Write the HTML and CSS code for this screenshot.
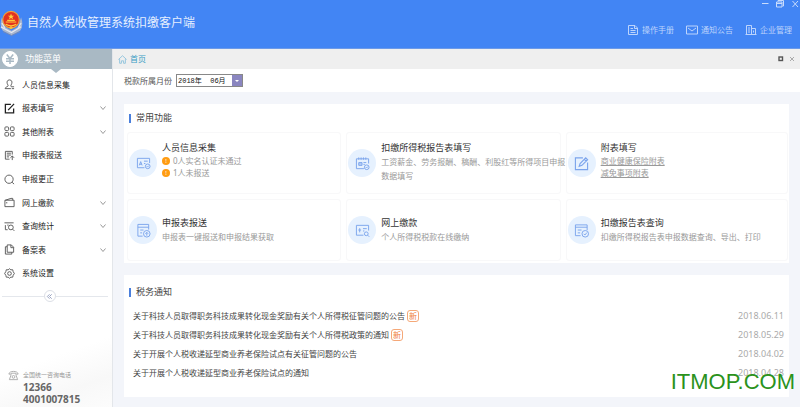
FILE: index.html
```
<!DOCTYPE html>
<html lang="zh-CN">

<head>
  <meta charset="UTF-8" />
  <title>自然人税收管理系统扣缴客户端</title>
  <meta name="viewport" content="width=device-width, initial-scale=1.0">
  <link rel="stylesheet" href="styles.css">
</head>

<body>

  <!-- Top bar -->
  <header class="topbar">
    <div class="brand">
      <svg class="emblem" viewBox="0 0 24 28">
        <path d="M2 8 Q-1 17 3 22 L12 27 L21 22 Q25 17 22 8 L19 18 L12 22 L5 18 Z" fill="#a9b6cf" />
        <path d="M1 18 L12 24 L22 18 M2 14 L5 19 M22 14 L19 19" fill="none" stroke="#e3e8f2" stroke-width="1.3" />
        <path d="M3 23 L12 27 L21 23" fill="none" stroke="#7389b8" />
        <circle cx="11.5" cy="10.5" r="8.6" fill="#e2321f" stroke="#f0a23a" stroke-width="1.2" />
        <path d="M11.5 4 L12.4 6.4 H14.8 L12.9 7.8 L13.6 10 L11.5 8.7 L9.4 10 L10.1 7.8 L8.2 6.4 H10.6 Z" fill="#ffd23e" />
        <path d="M6 13 H17 M7.5 11.3 H15.5 M6 15.2 Q11.5 18.5 17 15.2" fill="none" stroke="#ffc93a" stroke-width="1.2" />
        <circle cx="11.5" cy="18.8" r="1.8" fill="#f6b93a" />
      </svg>
      <h1>自然人税收管理系统扣缴客户端</h1>
    </div>
    <div class="topbar-right">
      <div class="window-controls">
        <button aria-label="最小化"><svg viewBox="0 0 8 8"><path d="M1 3.500 H7.500" /></svg></button>
        <button aria-label="还原"><svg viewBox="0 0 8 8"><path d="M2 1.500 V0.500 H7.500 V6 H6.500 M0.500 2 H6 V7 H0.500 Z M0.500 3.500 H6" /></svg></button>
        <button aria-label="关闭"><svg viewBox="0 0 8 8"><path d="M1.500 1 L7 7 M7 1 L1.500 7" /></svg></button>
      </div>
      <nav class="top-links">
        <a href="#">
          <svg viewBox="0 0 12 12"><path d="M1.500 1.500 H8 L10.500 4 V10.500 H1.500 Z M3.500 4.500 H6 M3.500 6.500 H8.500 M3.500 8.500 H8.500 M7.500 1.500 V4.500 H10" /></svg>
          操作手册
        </a>
        <a href="#">
          <svg viewBox="0 0 12 12"><path d="M0.500 2 H11.500 V10 H0.500 Z M2 4 L6 7 L10 4" /></svg>
          通知公告
        </a>
        <a href="#">
          <svg viewBox="0 0 12 12"><path d="M1.500 10.500 V1.500 H6.500 V10.500 M6.500 4.500 H10.500 V10.500 M0.500 10.500 H11.500 M3 4 H5 M3 6 H5 M3 8 H5 M8.500 6.500 V8.500" /></svg>
          企业管理
        </a>
      </nav>
    </div>
  </header>

  <div class="layout">

    <!-- Sidebar -->
    <aside class="sidebar">
      <div class="menu-head">
        <svg class="yen" viewBox="0 0 16 16">
          <circle cx="8" cy="8" r="7.500" fill="#fff" />
          <path d="M4.800 3.500 L8 7.500 L11.200 3.500 M8 7.500 V13 M4 7.700 H12 M4 10.200 H12" fill="none" stroke="#a9b9c4" stroke-width="1.500" />
        </svg>
        <h2>功能菜单</h2>
      </div>

      <nav class="menu">
        <a href="#">
          <svg class="icon" viewBox="0 0 12 12"><path d="M6 1 C3.500 1 3 3 3.500 4.800 C3.800 6.200 4.600 6.800 4.600 7.500 C4.400 8.500 1.500 8.400 1.200 10.500 H7.500 M6 1 C8.500 1 9 3 8.500 4.800 C8.200 6.200 7.400 6.800 7.400 7.500 L8 8.500 H11 M8.500 10.500 H11" /></svg>
          <span>人员信息采集</span>
        </a>
        <a href="#">
          <svg class="icon dark" viewBox="0 0 12 12"><path d="M7.500 1.500 H1.500 V10.800 H10.500 V6 M4.500 7.800 L11 1" /></svg>
          <span>报表填写</span>
          <svg class="arrow" viewBox="0 0 6 6"><path d="M0.500 1.500 L3 4.500 L5.500 1.500" /></svg>
        </a>
        <a href="#">
          <svg class="icon" viewBox="0 0 12 12"><rect x="1" y="1" width="4" height="4" rx="1" /><rect x="7" y="1" width="4" height="4" rx="1" /><rect x="1" y="7" width="4" height="4" rx="1" /><rect x="7" y="7" width="4" height="4" rx="1" /></svg>
          <span>其他附表</span>
          <svg class="arrow" viewBox="0 0 6 6"><path d="M0.500 1.500 L3 4.500 L5.500 1.500" /></svg>
        </a>
        <a href="#">
          <svg class="icon" viewBox="0 0 12 12"><path d="M6 10 H1.500 V1.500 H9 V5 M3 3.500 H7.500 M3 5.500 H7.500 M3 7.500 H5.500 M9 11 V6.500 M7 8.500 L9 6.500 L11 8.500" /></svg>
          <span>申报表报送</span>
        </a>
        <a href="#">
          <svg class="icon" viewBox="0 0 12 12"><circle cx="5.500" cy="5.700" r="4.500" /><path d="M8.800 9 L11 11" /></svg>
          <span>申报更正</span>
        </a>
        <a href="#">
          <svg class="icon" viewBox="0 0 12 12"><path d="M1 3.500 H11 V10.500 H1 Z M1.500 3.500 L7.500 1.500 H9.500 V3.500 M3 5.500 V7" /></svg>
          <span>网上缴款</span>
          <svg class="arrow" viewBox="0 0 6 6"><path d="M0.500 1.500 L3 4.500 L5.500 1.500" /></svg>
        </a>
        <a href="#">
          <svg class="icon" viewBox="0 0 12 12"><path d="M0.500 2 H10.500 M1.500 4.500 V9.500 H4 M3.500 4.500 H5" /><circle cx="7.500" cy="7" r="2.600" /><path d="M9.500 9 L11.300 10.800" /></svg>
          <span>查询统计</span>
          <svg class="arrow" viewBox="0 0 6 6"><path d="M0.500 1.500 L3 4.500 L5.500 1.500" /></svg>
        </a>
        <a href="#">
          <svg class="icon" viewBox="0 0 12 12"><path d="M3.500 1 H8 L10.500 3.500 V9 H3.500 Z M3.500 3 H1.500 V11 H8.500 V9 M7.500 1 V4 H10.500" /></svg>
          <span>备案表</span>
          <svg class="arrow" viewBox="0 0 6 6"><path d="M0.500 1.500 L3 4.500 L5.500 1.500" /></svg>
        </a>
        <a href="#">
          <svg class="icon" viewBox="0 0 12 12"><path d="M6 0.800 L7.500 2 L9.500 1.900 L10 3.900 L11.300 6 L10 8 L9.500 10 L7.500 10 L6 11.200 L4.500 10 L2.500 10 L2 8 L0.700 6 L2 3.900 L2.500 1.900 L4.500 2 Z" /><circle cx="6" cy="6" r="2" /></svg>
          <span>系统设置</span>
        </a>
      </nav>

      <div class="collapse">
        <button aria-label="收起菜单"><svg viewBox="0 0 8 8"><path d="M4 1.500 L1.500 4 L4 6.500 M6.500 1.500 L4 4 L6.500 6.500" /></svg></button>
      </div>

      <div class="hotline">
        <svg viewBox="0 0 12 12"><path d="M1 4.500 C1 0.500 11 0.500 11 4.500 H8.500 V3.500 H3.500 V4.500 Z M3.500 5 L1.500 10.500 H10.500 L8.500 5" /><circle cx="6" cy="7.500" r="1.500" /></svg>
        <div>
          <p class="hotline-label">全国统一咨询电话</p>
          <p class="hotline-number">12366</p>
          <p class="hotline-number">4001007815</p>
        </div>
      </div>
    </aside>

    <!-- Main area -->
    <main class="content">
      <div class="tabs">
        <a href="#">
          <svg viewBox="0 0 10 10"><path d="M0.500 5 L5 0.800 L9.500 5 M1.800 4.500 V9.200 H3.800 V6.500 H6.200 V9.200 H8.200 V4.500" /></svg>
          首页
        </a>
        <div class="tab-controls">
          <button aria-label="还原页签"><svg viewBox="0 0 6 6"><rect x="1" y="1" width="3.500" height="3.500" stroke="#555" stroke-width="1.400" /></svg></button>
          <button aria-label="关闭页签"><svg viewBox="0 0 6 6"><path d="M1 1 L5 5 M5 1 L1 5" stroke="#aaa" /></svg></button>
        </div>
      </div>

      <div class="period">
        <label for="month">税款所属月份</label>
        <div class="select-box">
          <select id="month">
            <option>2018年&nbsp;&nbsp;06月</option>
          </select>
        </div>
      </div>

      <div class="panels">
        <section class="panel">
          <h2>常用功能</h2>
          <div class="cards">
            <div class="card">
              <span class="round"><svg viewBox="0 0 16 16"><path d="M9 12.500 H1.500 V2.500 H14.500 V7.500 M3.500 10 L5 6 L6.500 10 M4 8.800 H6 M8.500 5.500 H12.500 M8.500 8 H10" /><circle cx="12.500" cy="11" r="2.500" /><path d="M11.500 11 L12.300 11.800 L13.600 10.300" /></svg></span>
              <div class="card-text tall">
                <h3>人员信息采集</h3>
                <p class="row"><i>!</i>0人实名认证未通过</p>
                <p class="row"><i>!</i>1人未报送</p>
              </div>
            </div>
            <div class="card">
              <span class="round"><svg viewBox="0 0 16 16"><path d="M9.500 13.500 H1.500 V3 H14.500 V8 M4 1.500 V4 M6.500 1.500 V4 M9 1.500 V4 M11.500 1.500 V4 M4 7 H7.500 V10 H4 Z M4 8.500 H7.500 M9 7 H12 M9 9 H10.500" /><circle cx="12.500" cy="12" r="2.500" /><path d="M11.500 12 L12.300 12.800 L13.600 11.300" /></svg></span>
              <div class="card-text tall">
                <h3>扣缴所得税报告表填写</h3>
                <p>工资薪金、劳务报酬、稿酬、利股红等所得项目申报<br>数据填写</p>
              </div>
            </div>
            <div class="card">
              <span class="round"><svg viewBox="0 0 16 16"><path d="M9.500 2 H1.500 V14.500 H14.500 V7 M5.500 11 L6.500 8 L12.500 2 L14.500 4 L8.500 10 Z M11 3.500 L13 5.500" stroke-width="1.200" /></svg></span>
              <div class="card-text tall">
                <h3>附表填写</h3>
                <p class="row"><a href="#">商业健康保险附表</a></p>
                <p class="row"><a href="#">减免事项附表</a></p>
              </div>
            </div>
            <div class="card">
              <span class="round"><svg viewBox="0 0 16 16"><path d="M7 14 H2 V1.500 H13.500 V7 M2 4.500 H13.500 M4.500 7.500 H8 M4.500 10.500 H6.500" /><circle cx="11.500" cy="11.500" r="3.500" /><path d="M11.500 13.500 V10 M10 11.500 L11.500 10 L13 11.500" /></svg></span>
              <div class="card-text">
                <h3>申报表报送</h3>
                <p>申报表一键报送和申报结果获取</p>
              </div>
            </div>
            <div class="card">
              <span class="round"><svg viewBox="0 0 16 16"><path d="M9 13 H1.500 V2.500 H14.500 V8 M3.500 7.500 H6.500 M5 5.500 V10 M8.500 6 H12.500 M8.500 8.500 H10" /><circle cx="12" cy="11.500" r="2" /><path d="M13.500 13 L15.200 14.700" /></svg></span>
              <div class="card-text">
                <h3>网上缴款</h3>
                <p>个人所得税税款在线缴纳</p>
              </div>
            </div>
            <div class="card">
              <span class="round"><svg viewBox="0 0 16 16"><path d="M7 13.500 H1.500 V2 H14 V7.500 M1.500 4.500 H14 M4 7.500 H8 M4 10.500 H6.500" /><circle cx="12" cy="11.500" r="3.500" /><path d="M10.300 11.500 L11.600 12.800 L13.800 10.200" /></svg></span>
              <div class="card-text">
                <h3>扣缴报告表查询</h3>
                <p>扣缴所得税报告表申报数据查询、导出、打印</p>
              </div>
            </div>
          </div>
        </section>

        <section class="panel news">
          <h2>税务通知</h2>
          <ul>
            <li><a href="#">关于科技人员取得职务科技成果转化现金奖励有关个人所得税征管问题的公告</a><em>新</em><time>2018.06.11</time></li>
            <li><a href="#">关于科技人员取得职务科技成果转化现金奖励有关个人所得税政策的通知</a><em>新</em><time>2018.05.29</time></li>
            <li><a href="#">关于开展个人税收递延型商业养老保险试点有关征管问题的公告</a><time>2018.04.02</time></li>
            <li><a href="#">关于开展个人税收递延型商业养老保险试点的通知</a><time>2018.04.28</time></li>
          </ul>
        </section>
      </div>
    </main>
  </div>

  <div class="watermark">ITMOP.COM</div>

</body>

</html>
```
FILE: styles.css
```
* {
  margin: 0;
  padding: 0;
  box-sizing: border-box;
}

body {
  min-height: 100vh;
  display: flex;
  flex-direction: column;
  position: relative;
  font-family: "Noto Sans", "Noto Sans CJK SC", sans-serif;
  font-size: 8px;
  line-height: 14px;
  color: #444;
  background: #f3f5fa;
}

a {
  color: inherit;
  text-decoration: none;
}

button {
  background: none;
  border: none;
  color: inherit;
  cursor: pointer;
}

svg {
  display: block;
  flex: none;
  fill: none;
  stroke: currentColor;
  stroke-width: 1;
}

/* === Top bar === */
.topbar {
  height: 49px;
  display: flex;
  justify-content: space-between;
  background: #4285f4;
  border-bottom: 1px solid #6c9ae8;
  color: #fff;
}

.brand {
  display: flex;
  align-items: center;
  gap: 4px;
  padding-bottom: 2px;
}

.emblem {
  width: 23px;
  height: 28px;
  stroke: none;
}

.brand h1 {
  font-size: 12px;
  font-weight: normal;
  color: #e6effe;
}

.topbar-right {
  display: flex;
  flex-direction: column;
  gap: 15px;
}

.window-controls {
  display: flex;
  justify-content: flex-end;
  gap: 7px;
  padding-right: 1px;
  color: #c9dcfc;
}

.window-controls svg {
  width: 8px;
  height: 8px;
}

.top-links {
  display: flex;
  gap: 12px;
  padding-right: 8px;
  color: #bdd4fc;
}

.top-links a {
  display: flex;
  align-items: center;
  gap: 3px;
}

.top-links svg {
  width: 12px;
  height: 12px;
}

/* === Sidebar === */
.layout {
  flex: 1;
  display: flex;
}

.sidebar {
  width: 112px;
  display: flex;
  flex-direction: column;
  background: linear-gradient(160deg, #fff 82%, #f8f8f8 92%, #fcfcfc);
}

.menu-head {
  height: 20px;
  display: flex;
  align-items: center;
  gap: 7px;
  padding-left: 2px;
  position: relative;
  background: #a9b9c4;
  color: #fff;
}

/* small pointer under the menu title */
.menu-head::after {
  content: "";
  position: absolute;
  top: 100%;
  left: 50%;
  margin-left: -5px;
  border: 5px solid transparent;
  border-top: 4px solid #a9b9c4;
  border-bottom: none;
}

.yen {
  width: 16px;
  height: 16px;
}

.menu-head h2 {
  font-size: 9px;
  font-weight: normal;
}

.menu {
  height: 212px;
  margin-top: 4px;
  display: flex;
  flex-direction: column;
}

.menu a {
  flex: 1;
  display: flex;
  align-items: center;
  gap: 7px;
  padding: 0 6px 0 4px;
  color: #222;
}

.menu .icon {
  width: 11px;
  height: 11px;
  color: #555;
}

.menu .dark {
  color: #222;
  stroke-width: 1.400;
}

.menu .arrow {
  width: 6px;
  height: 6px;
  margin-left: auto;
  color: #999;
}

.collapse {
  display: flex;
  align-items: center;
  margin: 5px 4px 0 2px;
}

.collapse::before,
.collapse::after {
  content: "";
  height: 1px;
  background: #e4e7ec;
}

.collapse::before {
  flex: 4;
}

.collapse::after {
  flex: 5;
}

.collapse button {
  width: 12px;
  height: 12px;
  display: flex;
  align-items: center;
  justify-content: center;
  border: 1px solid #dcdfe6;
  border-radius: 50%;
  background: #fff;
  color: #8b97b8;
}

.collapse svg {
  width: 7px;
  height: 7px;
}

.hotline {
  display: flex;
  gap: 4px;
  margin-top: auto;
  padding: 0 0 2px 8px;
  color: #666;
}

.hotline svg {
  width: 11px;
  height: 11px;
  color: #aaa;
}

.hotline-label {
  font-size: 6px;
  line-height: 11px;
  color: #999;
}

.hotline-number {
  font-size: 10px;
  line-height: 12px;
  font-weight: bold;
}

/* === Main area === */
.content {
  flex: 1;
  min-width: 0;
  border-left: 1px solid #e3e6ea;
}

.tabs {
  height: 20px;
  display: flex;
  align-items: center;
  justify-content: space-between;
  padding: 0 5px;
  background: #efefef;
  color: #3a9cc4;
}

.tabs a {
  display: flex;
  align-items: center;
  gap: 3px;
}

.tabs a svg {
  width: 9px;
  height: 9px;
  color: #8fc3dc;
}

.tab-controls {
  display: flex;
  gap: 5px;
}

.tab-controls svg {
  width: 6px;
  height: 6px;
}

.period {
  height: 23px;
  display: flex;
  align-items: center;
  gap: 4px;
  padding-left: 11px;
  background: #fff;
  color: #555;
}

.select-box {
  position: relative;
  display: flex;
}

.select-box select {
  width: 67px;
  height: 13px;
  appearance: none;
  border: 1px solid #888;
  border-radius: 0;
  padding-left: 1px;
  background: #fff;
  color: #111;
  font-family: "Liberation Mono", "Noto Sans CJK SC", monospace;
  font-size: 7px;
}

.select-box::before {
  content: "";
  position: absolute;
  top: 1px;
  right: 1px;
  width: 10px;
  height: 11px;
  background: #8a86c0;
  pointer-events: none;
}

.select-box::after {
  content: "";
  position: absolute;
  top: 6px;
  right: 4px;
  border: 2px solid transparent;
  border-top-color: #fff;
  border-bottom: none;
  pointer-events: none;
}

.panels {
  display: flex;
  flex-direction: column;
  gap: 12px;
  padding: 12px 11px 9px;
}

.panel {
  padding: 0 1px 2px 3px;
  background: #fff;
}

.panel h2 {
  height: 28px;
  display: flex;
  align-items: center;
  gap: 5px;
  padding-left: 2px;
  font-size: 9px;
  font-weight: normal;
}

.panel h2::before {
  content: "";
  width: 2px;
  height: 9px;
  background: #4a7fdc;
}

/* === Function cards === */
.cards {
  display: grid;
  grid-template-columns: 214fr 214fr 222fr;
  grid-auto-rows: 62px;
  gap: 5px;
}

.card {
  min-width: 0;
  display: flex;
  align-items: center;
  gap: 5px;
  padding-left: 1px;
  border: 1px solid #f8f8f9;
  border-radius: 3px;
}

.round {
  width: 28px;
  height: 28px;
  flex: none;
  display: flex;
  align-items: center;
  justify-content: center;
  border-radius: 50%;
  background: #e6f1fe;
  color: #7ba4ec;
}

.round svg {
  width: 15px;
  height: 15px;
}

.card-text {
  color: #999;
  white-space: nowrap;
}

.tall {
  min-height: 44px;
}

.card h3 {
  font-size: 9px;
  font-weight: normal;
  color: #333;
}

.card .row {
  display: flex;
  align-items: center;
  gap: 3px;
  line-height: 12px;
}

.card .row a {
  text-decoration: underline;
}

.card i {
  width: 8px;
  height: 8px;
  border-radius: 50%;
  background: #ff9c12;
  color: #fff;
  font-size: 6px;
  font-style: normal;
  line-height: 8px;
  text-align: center;
}

/* === Notices === */
.news {
  padding: 3px 5px 15px 3px;
}

.news ul {
  list-style: none;
  padding-left: 6px;
}

.news li {
  height: 19px;
  display: flex;
  align-items: center;
  gap: 2px;
}

.news em {
  padding: 0 1px;
  border: 1px solid #f5a878;
  border-radius: 3px;
  font-style: normal;
  line-height: 10px;
  color: #f08040;
}

.news time {
  margin-left: auto;
  font-size: 9px;
  color: #aaa;
}

.watermark {
  position: absolute;
  right: 5px;
  bottom: 12px;
  font-family: "Liberation Sans", Arial, sans-serif;
  font-size: 22px;
  line-height: 26px;
  color: #2b921c;
}
```
